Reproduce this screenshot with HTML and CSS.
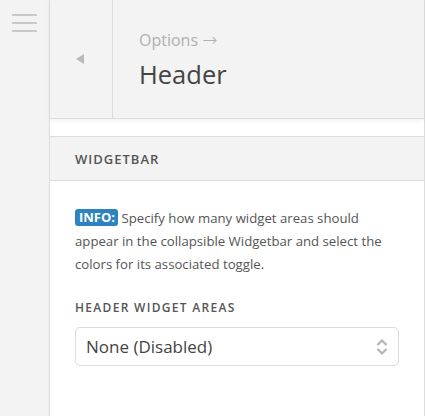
FILE: index.html
```html
<!DOCTYPE html>
<html>
<head>
<meta charset="utf-8">
<link rel="stylesheet" href="styles.css">
</head>
<body>
<div class="app">
  <aside class="sidebar">
    <div class="hamburger"><span></span><span></span><span></span></div>
  </aside>
  <main class="panel">
    <header class="panel-header">
      <div class="back"><span class="tri"></span></div>
      <div class="title">
        <div class="crumb">Options <span class="arrow">→</span></div>
        <h1 class="heading">Header</h1>
      </div>
    </header>
    <div class="strip"></div>
    <div class="section-head">WIDGETBAR</div>
    <div class="content">
      <p class="desc"><span class="badge">INFO:</span> Specify how many widget areas should appear in the collapsible Widgetbar and select the colors for its associated toggle.</p>
      <div class="label">HEADER WIDGET AREAS</div>
      <div class="select">
        <span class="select-text">None (Disabled)</span>
        <svg class="arrows" width="12" height="18" viewBox="0 0 12 18"><path d="M1.5 7 L6 2.5 L10.5 7" fill="none" stroke="#b4b4b4" stroke-width="2.2"/><path d="M1.5 11 L6 15.5 L10.5 11" fill="none" stroke="#b4b4b4" stroke-width="2.2"/></svg>
      </div>
    </div>
  </main>
</div>
</body>
</html>
```
FILE: styles.css
```css
* { box-sizing: border-box; }
html, body { margin: 0; padding: 0; }
body {
  font-family: "Open Sans", "Liberation Sans", sans-serif;
  background: #fff;
  width: 425px;
  height: 416px;
  overflow: hidden;
}
.app {
  display: flex;
  height: 416px;
}
.sidebar {
  width: 50px;
  flex: none;
  background: #f3f3f3;
  border-right: 1px solid #dcdcdc;
  padding: 14px 0 0 12px;
}
.hamburger {
  display: flex;
  flex-direction: column;
  gap: 6px;
  width: 25px;
}
.hamburger span {
  display: block;
  height: 2px;
  background: #c9c9c9;
}
.panel {
  flex: 1;
  border-right: 1px solid #dcdcdc;
  background: #fff;
  display: flex;
  flex-direction: column;
}
.panel-header {
  display: flex;
  height: 119px;
  background: #f3f3f3;
  border-bottom: 1px solid #dcdcdc;
  box-shadow: 0 2px 6px rgba(0,0,0,0.05);
  position: relative;
}
.back {
  width: 63px;
  border-right: 1px solid #dcdcdc;
  display: flex;
  align-items: center;
  justify-content: center;
  padding-right: 2px;
}
.tri {
  width: 0;
  height: 0;
  border-top: 5px solid transparent;
  border-bottom: 5px solid transparent;
  border-right: 8px solid #b9b9b9;
}
.title {
  padding: 28px 0 0 26px;
}
.crumb {
  font-size: 16px;
  line-height: 24px;
  color: #b0b0b0;
}
.arrow {
  font-family: "DejaVu Sans", sans-serif;
  font-size: 18px;
  line-height: 16px;
  font-weight: 300;
}
.heading {
  margin: 5px 0 0;
  font-size: 25.5px;
  line-height: 34px;
  font-weight: 500;
  color: #444;
}
.strip {
  height: 18px;
  border-bottom: 1px solid #dcdcdc;
}
.section-head {
  height: 44px;
  background: #f3f3f3;
  border-bottom: 1px solid #dcdcdc;
  padding-left: 25px;
  display: flex;
  align-items: center;
  font-size: 13px;
  font-weight: 600;
  letter-spacing: 1px;
  color: #555;
}
.content {
  padding: 26px 25px 0;
}
.desc {
  margin: 0;
  font-size: 13.2px;
  line-height: 23px;
  color: #555;
}
.badge {
  display: inline-block;
  vertical-align: 1px;
  background: #2d82c0;
  color: #fff;
  font-weight: 700;
  font-size: 13px;
  line-height: 17px;
  padding: 0 3px 0 4px;
  border-radius: 3px;
}
.label {
  margin-top: 23px;
  font-size: 12px;
  font-weight: 600;
  letter-spacing: 1.3px;
  color: #555;
  line-height: 18px;
}
.select {
  margin-top: 10px;
  height: 39px;
  width: 324px;
  border: 1px solid #dcdcdc;
  border-radius: 5px;
  display: flex;
  align-items: center;
  justify-content: space-between;
  padding: 0 10px 0 10px;
}
.select-text {
  font-size: 17px;
  color: #444;
}
.arrows { display: block; }
```
